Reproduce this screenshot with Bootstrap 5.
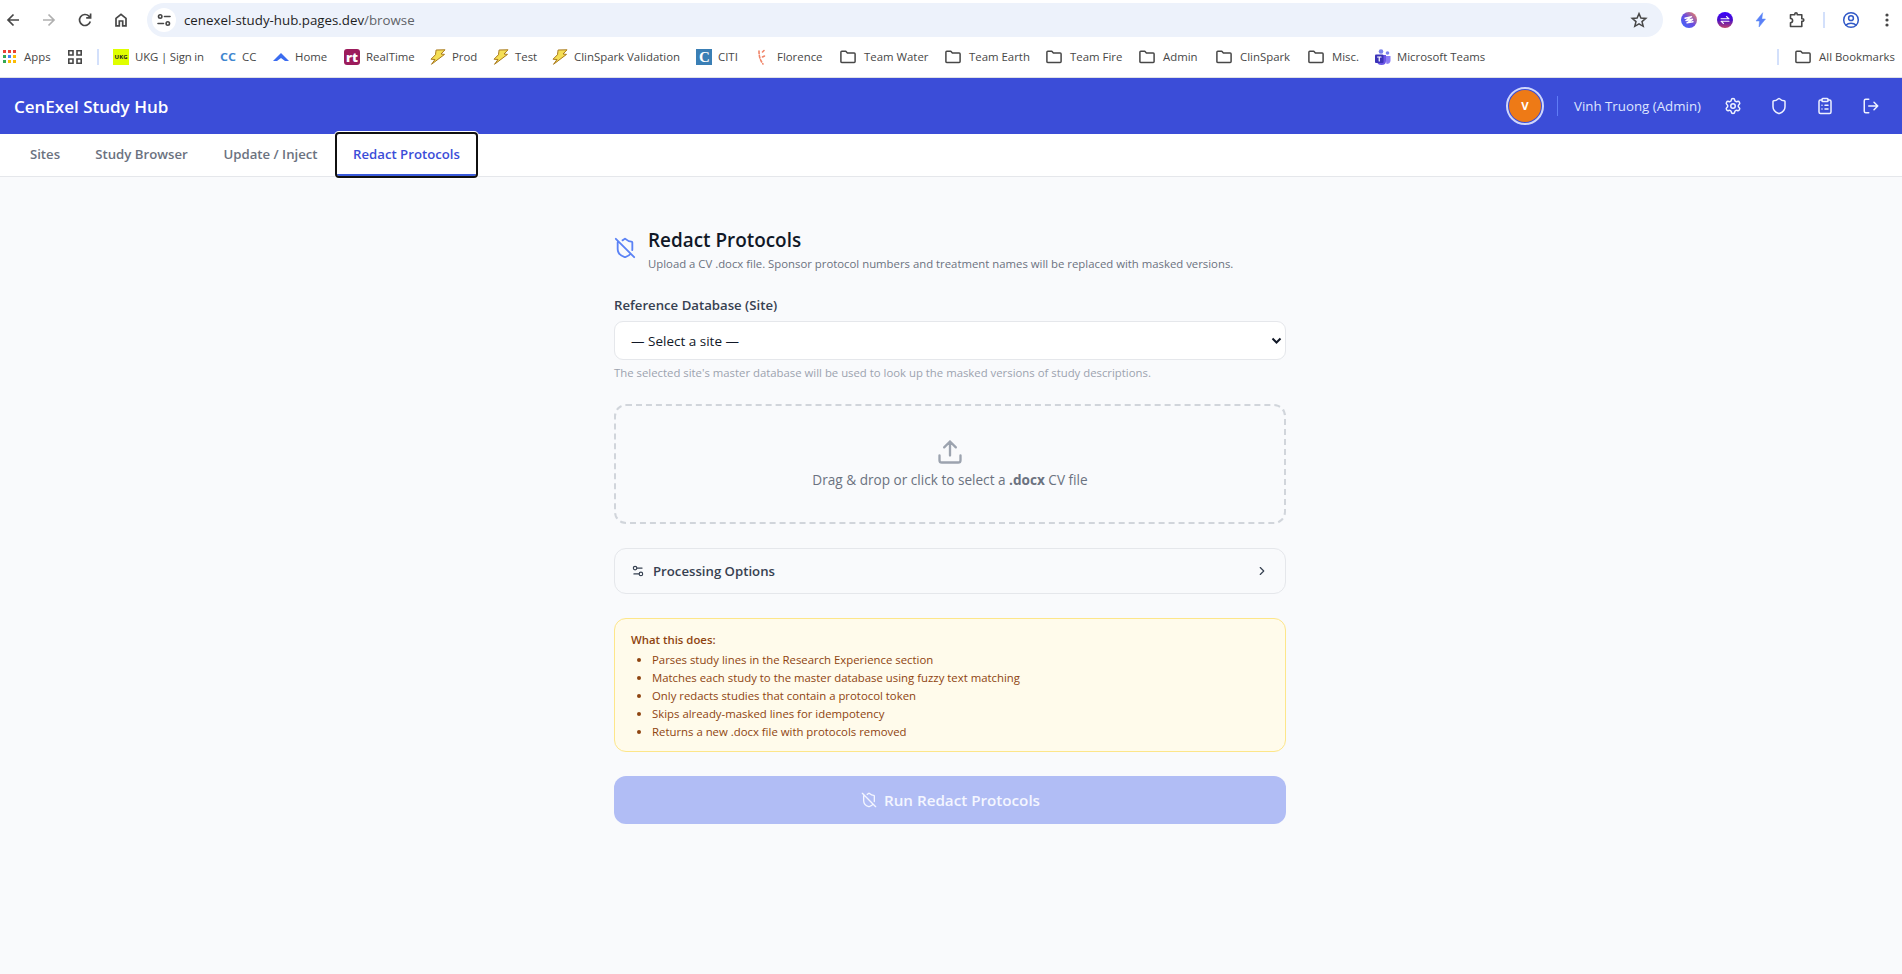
<!DOCTYPE html>
<html lang="en">
<head>
<meta charset="utf-8">
<title>CenExel Study Hub</title>
<link href="https://cdn.jsdelivr.net/npm/bootstrap@5.3.0/dist/css/bootstrap.min.css" rel="stylesheet">
<style>
html,body{height:974px;overflow:hidden}
body{background:#f9fafc;font-family:"Open Sans","Noto Sans",sans-serif;font-size:13.2px;line-height:20px;color:#111827}
svg{display:block;flex:none;fill:none;stroke:currentColor;stroke-width:2;stroke-linecap:round;stroke-linejoin:round}
.toolbar{height:37px;padding-top:3px;color:#474747}
.tool-nav{width:147px;padding-left:4px}
.tool-nav svg{margin-right:18px;stroke-width:1.7;stroke-linecap:butt;stroke-linejoin:miter}
.tool-nav .inactive{color:#b0b0b0}
.omnibox{width:1516px;height:34px;border-radius:17px;background:#edf2fb;padding:0 15px 0 5px}
.site-info{width:24px;height:24px;background:#fff}
.url{font-size:13.3px;color:#1f1f1f;margin-left:8px}
.url span{color:#5f6368}
.bookmarks{height:41px;border-bottom:1px solid #dfe1e5;font-size:11.4px;color:#474747;padding:0 7px 0 3px}
.bm{display:flex;align-items:center;white-space:nowrap;flex:none}
.bm svg{margin-right:6px}
.bm.folder svg{margin-right:8px}
.vline{width:2px;height:16px;background:#d3e0fb;flex:none}
.topbar{height:56px;background:#3b4dd8;padding:0 22px 0 14px;color:#dfe5ff}
.brand-name{font-size:17px;font-weight:600;color:#fff;padding-top:1px}
.avatar{width:38px;height:38px;border:2px solid #cfd6fb;padding:1px}
.avatar div{background:#ee7a16;color:#fff;font-size:11.4px;font-weight:700}
.user-sep{width:1px;height:20px;background:#5f7cf7;margin:0 16px 0 13px}
.user-name{width:150px;white-space:nowrap;font-size:13.3px}
.tabs{height:43px;background:#fff;border-bottom:1px solid #e5e7eb;padding-left:12px}
.tab{height:42px;font-weight:600;color:#6b7280;text-align:center;line-height:41px;flex:none;white-space:nowrap}
.tab.current{margin-left:1px;color:#3b4dd8;border-bottom:2px solid #3b5bdb;outline:2px solid #101010;border-radius:2px;box-shadow:0 0 0 3px #fff;position:relative;background:#fff}
.column{width:672px;margin:0 auto 0 614px;padding-top:49px}
.page-title{font-size:18.900px;font-weight:600;line-height:28px}
.hint{font-size:11.350px;line-height:16px;white-space:nowrap}
.site-select{height:39px;border:1px solid #e5e7eb;border-radius:9px;background:#fff;padding:0 3px 0 16px;font-size:13.500px}
.dropzone{height:120px;border:2px dashed #d1d5db;border-radius:12px;color:#6b7280;margin-top:23px;font-size:13.600px}
.options{height:46px;border:1px solid #e5e7eb;border-radius:12px;padding:0 16px;margin-top:24px;color:#374151;font-weight:600}
.notes{height:134px;border:1px solid #fde68a;border-radius:12px;background:#fffbeb;color:#8e4410;font-size:11.360px;line-height:18px;padding:12px 16px;margin-top:24px}
.notes ul{padding-left:21px;margin:2px 0 0}
.run{height:48px;border-radius:12px;background:#b1bdf5;color:#f4f6ff;font-size:15.200px;font-weight:600;margin-top:24px;padding-left:1px}
</style>
</head>
<body>
<svg width="0" height="0" class="position-absolute"><defs>
<symbol id="folder" viewBox="0 0 16 16"><path d="M.9 3.200q0-.9.9-.9h4l1.600 1.800h6.800q.9 0 .9.9v7.600q0 .9-.9.9H1.800q-.9 0-.9-.9z" stroke-width="1.500"/></symbol>
<symbol id="bolt" viewBox="0 0 16 16"><path d="M6.500 1 15 .8 11 5l3.500.4L1.500 15.300 5 10.500l-4-.3L5.200 6z" fill="#f5df55" stroke="#a8791c" stroke-width="1"/></symbol>
<symbol id="shield-off" viewBox="0 0 24 24"><path d="m2 2 20 20M5 5a1 1 0 0 0-1 1v7c0 5 3.500 7.500 7.670 8.940a1 1 0 0 0 .67.010c2.350-.82 4.480-1.970 5.900-3.710M9.309 3.652A12.252 12.252 0 0 0 11.240 2.280a1.170 1.170 0 0 1 1.520 0C14.510 3.810 17 5 19 5a1 1 0 0 1 1 1v7a9.784 9.784 0 0 1-.08 1.264"/></symbol>
<symbol id="sliders" viewBox="0 0 24 24"><path d="M14 17H5M19 7h-9"/><circle cx="17" cy="17" r="3"/><circle cx="7" cy="7" r="3"/></symbol>
<linearGradient id="g1" x1="1" y1="0" x2="0" y2="1"><stop stop-color="#ff8a50"/><stop offset=".5" stop-color="#6a4be0"/><stop offset="1" stop-color="#3b6cff"/></linearGradient>
<linearGradient id="g2" x1="0" y1="0" x2="0" y2="1"><stop stop-color="#3a00ff"/><stop offset=".5" stop-color="#4a10c8"/><stop offset="1" stop-color="#c0446c"/></linearGradient>
</defs></svg>

<div class="bg-white">
<div class="toolbar d-flex align-items-center">
  <div class="tool-nav d-flex align-items-center">
    <svg width="18" height="18" viewBox="0 0 18 18"><path d="M15 9H4.500M9.500 3.500 4 9l5.500 5.500"/></svg>
    <svg class="inactive" width="18" height="18" viewBox="0 0 18 18"><path d="M3 9h10.500M8.500 3.500 14 9l-5.500 5.500"/></svg>
    <svg width="18" height="18" viewBox="0 0 18 18"><path d="M14.300 10.500A5.500 5.500 0 1 1 13 5.200l1.500 1.500M14.600 2.500v4.400h-4.400"/></svg>
    <svg width="18" height="18" viewBox="0 0 18 18"><path d="M4 14.800V7.300L9 3.400l5 3.900v7.500h-3.300v-4.800H7.300v4.800z"/></svg>
  </div>
  <div class="omnibox d-flex align-items-center">
    <div class="site-info rounded-circle d-flex align-items-center justify-content-center"><svg width="14" height="14" viewBox="0 0 14 14"><g stroke-width="1.600"><circle cx="3.200" cy="3.500" r="1.700"/><path d="M7.500 3.500H13M1 10.500h5.500"/><circle cx="10.800" cy="10.500" r="1.700"/></g></svg></div>
    <div class="url">cenexel-study-hub.pages.dev<span>/browse</span></div>
    <svg class="ms-auto" width="18" height="18" viewBox="0 0 18 18"><path d="m9 2.600 1.900 4.400 4.900.4-3.800 3.200 1.200 4.700L9 12.800l-4.200 2.500L6 10.600 2.200 7.400l4.900-.4z" stroke-width="1.500" stroke-linejoin="miter"/></svg>
  </div>
  <svg style="margin-left:18px" width="16" height="16" viewBox="0 0 16 16"><circle cx="8" cy="8" r="8" fill="url(#g1)" stroke="none"/><path d="m4 6.200 6.500-1.500L5 8.600l6.500-1.300-5.500 3.600 6-1.200" stroke="#fff" stroke-width="1.400"/></svg>
  <svg style="margin-left:20px" width="16" height="16" viewBox="0 0 16 16"><circle cx="8" cy="8" r="8" fill="url(#g2)" stroke="none"/><path d="M4 6.800h8L9.500 4.500M12 9.200H4l2.500 2.300" stroke="#fff" stroke-width="1.100"/></svg>
  <svg style="margin-left:21px" width="14" height="16" viewBox="0 0 14 16"><path d="M8.500 1 2 9h3.500L5 15l6.500-8H8z" fill="#5b7ff7" stroke="#5b8cf7" stroke-width=".5"/></svg>
  <svg style="margin-left:20px" width="18" height="18" viewBox="0 0 18 18"><path d="M2.500 3.800h4.300V3a1 1 0 0 1 2.400 0v.8h4.600v4h.8a1 1 0 0 1 0 2.400h-.8v5.300H2.500v-3.800a2.100 2.100 0 0 0 0-4.200z" stroke-width="1.600"/></svg>
  <div class="vline" style="margin-left:17px"></div>
  <svg style="margin-left:17px;color:#3159c7" width="18" height="18" viewBox="0 0 18 18"><g stroke-width="1.500"><circle cx="9" cy="9" r="7.300"/><circle cx="9" cy="7.200" r="2.400"/><path d="M4 14c2.500-2.500 7.500-2.500 10 0"/></g></svg>
  <svg style="margin-left:18px" width="18" height="18" viewBox="0 0 18 18"><g fill="#474747" stroke="none"><circle cx="9" cy="4" r="1.600"/><circle cx="9" cy="9" r="1.600"/><circle cx="9" cy="14" r="1.600"/></g></svg>
</div>
<div class="bookmarks d-flex align-items-center">
  <div class="bm" style="width:65px"><svg width="14" height="14" viewBox="0 0 14 14" style="margin-right:7px"><g stroke="none"><path fill="#ea4335" d="M0 0h3v3H0zM5 0h3v3H5zM10 0h3v3h-3z"/><path fill="#34a853" d="M0 5h3v3H0zM0 10h3v3H0z"/><path fill="#4285f4" d="M5 5h3v3H5z"/><path fill="#fbbc04" d="M10 5h3v3h-3zM5 10h3v3H5zM10 10h3v3h-3z"/></g></svg>Apps</div>
  <div class="bm" style="width:29px"><svg width="14" height="14" viewBox="0 0 14 14"><path d="M.8 .8h4.200v4.200H.8zM9 .8h4.200v4.200H9zM.8 9h4.200v4.200H.8zM9 9h4.200v4.200H9z" stroke-width="1.600" stroke-linejoin="miter"/></svg></div>
  <div class="vline" style="margin-right:14px"></div>
  <div class="bm" style="width:107px;letter-spacing:-.15px"><svg width="16" height="16" viewBox="0 0 16 16"><path d="M0 0h16v16H0z" fill="#dfff00" stroke="none"/><text x="1.500" y="10.300" font-size="6" font-weight="700" fill="#222" stroke="none" textLength="13">UKG</text></svg>UKG | Sign in</div>
  <div class="bm" style="width:53px"><svg width="16" height="16" viewBox="0 0 16 16"><text x="0" y="12" font-size="11" font-weight="700" fill="#3f86cf" stroke="none" textLength="16" lengthAdjust="spacingAndGlyphs">CC</text></svg>CC</div>
  <div class="bm" style="width:71px"><svg width="16" height="16" viewBox="0 0 16 16"><path d="M0 12 8 4l8 8h-4L8 9l-4 3z" fill="#3b6cf0" stroke="none"/></svg>Home</div>
  <div class="bm" style="width:86px"><svg width="16" height="16" viewBox="0 0 16 16"><rect width="16" height="16" rx="3" fill="#9c1c5c" stroke="none"/><text x="2" y="13" font-size="13" font-weight="800" fill="#fff" stroke="none" textLength="12" lengthAdjust="spacingAndGlyphs">rt</text></svg>RealTime</div>
  <div class="bm" style="width:63px"><svg width="16" height="16"><use href="#bolt"/></svg>Prod</div>
  <div class="bm" style="width:59px"><svg width="16" height="16"><use href="#bolt"/></svg>Test</div>
  <div class="bm" style="width:144px"><svg width="16" height="16"><use href="#bolt"/></svg>ClinSpark Validation</div>
  <div class="bm" style="width:59px"><svg width="16" height="16" viewBox="0 0 16 16"><path d="M0 0h16v16H0z" fill="#3a7fb5" stroke="none"/><text x="3" y="13" font-family="Liberation Serif" font-size="15" font-weight="700" fill="#fff" stroke="none">C</text></svg>CITI</div>
  <div class="bm" style="width:85px"><svg width="16" height="16" viewBox="0 0 16 16"><path d="M4 2c0 5 1 9 4 13M9 1.500 7.500 3M9.500 7 7.500 8" stroke="#f08468" stroke-width="1.600" stroke-dasharray="2.500 2"/></svg>Florence</div>
  <div class="bm folder" style="width:105px"><svg width="16" height="16"><use href="#folder"/></svg>Team Water</div>
  <div class="bm folder" style="width:101px"><svg width="16" height="16"><use href="#folder"/></svg>Team Earth</div>
  <div class="bm folder" style="width:93px"><svg width="16" height="16"><use href="#folder"/></svg>Team Fire</div>
  <div class="bm folder" style="width:77px"><svg width="16" height="16"><use href="#folder"/></svg>Admin</div>
  <div class="bm folder" style="width:92px"><svg width="16" height="16"><use href="#folder"/></svg>ClinSpark</div>
  <div class="bm folder" style="width:67px"><svg width="16" height="16"><use href="#folder"/></svg>Misc.</div>
  <div class="bm"><svg width="16" height="16" viewBox="0 0 16 16"><g stroke="none"><circle cx="6" cy="2.500" r="2.300" fill="#7b83eb"/><circle cx="12.500" cy="4" r="1.800" fill="#7b83eb"/><path d="M10 7h5.500v5q-.5 3-4 3z" fill="#8b7cf5"/><path d="M2 6h9v6q0 4-4.500 4T2 12z" fill="#6a55e6"/><rect y="5.500" width="8.500" height="8.500" rx="1" fill="#3a32b8"/></g><path d="M2.500 8h3.500M4.250 8v4" stroke="#fff" stroke-width="1.200"/></svg>Microsoft Teams</div>
  <div class="vline ms-auto" style="margin-right:16px"></div>
  <div class="bm folder"><svg width="16" height="16"><use href="#folder"/></svg>All Bookmarks</div>
</div>
</div>

<header class="topbar d-flex align-items-center">
  <div class="brand-name">CenExel Study Hub</div>
  <div class="avatar rounded-circle ms-auto"><div class="w-100 h-100 rounded-circle d-flex align-items-center justify-content-center">V</div></div>
  <div class="user-sep"></div>
  <div class="user-name">Vinh Truong (Admin)</div>
  <div class="d-flex" style="gap:28px;color:#eef1ff">
    <svg width="18" height="18" viewBox="0 0 24 24"><path d="M9.671 4.136a2.340 2.340 0 0 1 4.659 0 2.340 2.340 0 0 0 3.319 1.915 2.340 2.340 0 0 1 2.330 4.033 2.340 2.340 0 0 0 0 3.831 2.340 2.340 0 0 1-2.330 4.033 2.340 2.340 0 0 0-3.319 1.915 2.340 2.340 0 0 1-4.659 0 2.340 2.340 0 0 0-3.320-1.915 2.340 2.340 0 0 1-2.330-4.033 2.340 2.340 0 0 0 0-3.831A2.340 2.340 0 0 1 6.350 6.051a2.340 2.340 0 0 0 3.319-1.915"/><circle cx="12" cy="12" r="3"/></svg>
    <svg width="18" height="18" viewBox="0 0 24 24"><path d="M20 13c0 5-3.500 7.500-7.660 8.950a1 1 0 0 1-.67-.01C7.500 20.500 4 18 4 13V6a1 1 0 0 1 1-1c2 0 4.500-1.200 6.240-2.720a1.170 1.170 0 0 1 1.520 0C14.510 3.810 17 5 19 5a1 1 0 0 1 1 1z"/></svg>
    <svg width="18" height="18" viewBox="0 0 24 24"><rect x="8" y="2" width="8" height="4" rx="1"/><path d="M16 4h2a2 2 0 0 1 2 2v14a2 2 0 0 1-2 2H6a2 2 0 0 1-2-2V6a2 2 0 0 1 2-2h2M12 11h4M12 16h4M8 11h.01M8 16h.01"/></svg>
    <svg width="18" height="18" viewBox="0 0 24 24"><path d="M9 21H5a2 2 0 0 1-2-2V5a2 2 0 0 1 2-2h4M16 17l5-5-5-5M21 12H9"/></svg>
  </div>
</header>
<nav class="tabs d-flex">
  <div class="tab" style="width:66px">Sites</div>
  <div class="tab" style="width:127px">Study Browser</div>
  <div class="tab" style="width:131px">Update / Inject</div>
  <div class="tab current" style="width:139px">Redact Protocols</div>
</nav>

<main class="column">
  <div class="d-flex align-items-start">
    <svg width="22" height="22" style="color:#5b82f5;margin:11px 12px 0 0"><use href="#shield-off"/></svg>
    <div><div class="page-title">Redact Protocols</div><div class="hint" style="color:#6b7280;margin-top:2px">Upload a CV .docx file. Sponsor protocol numbers and treatment names will be replaced with masked versions.</div></div>
  </div>
  <div class="fw-semibold" style="color:#374151;margin-top:23px">Reference Database (Site)</div>
  <div class="site-select d-flex align-items-center justify-content-between" style="margin-top:6px"><span>— Select a site —</span><svg width="11" height="8" viewBox="0 0 11 8"><path d="m1.500 1.500 4 4 4-4" stroke-linecap="butt" stroke-linejoin="miter"/></svg></div>
  <div class="hint" style="color:#9ca3af;margin-top:5px">The selected site's master database will be used to look up the masked versions of study descriptions.</div>
  <div class="dropzone d-flex flex-column align-items-center">
    <svg width="28" height="28" viewBox="0 0 24 24" style="color:#9ca3af;margin-top:32px"><path d="M12 3v12M17 8l-5-5-5 5M21 15v4a2 2 0 0 1-2 2H5a2 2 0 0 1-2-2v-4"/></svg>
    <div style="margin-top:4px">Drag &amp; drop or click to select a <b>.docx</b> CV file</div>
  </div>
  <div class="options d-flex align-items-center"><svg width="14" height="14" style="margin-right:8px"><use href="#sliders"/></svg><span>Processing Options</span><svg class="ms-auto" width="14" height="14" viewBox="0 0 24 24"><path d="m9 18 6-6-6-6"/></svg></div>
  <div class="notes"><div class="fw-semibold">What this does:</div>
    <ul><li>Parses study lines in the Research Experience section</li><li>Matches each study to the master database using fuzzy text matching</li><li>Only redacts studies that contain a protocol token</li><li>Skips already-masked lines for idempotency</li><li>Returns a new .docx file with protocols removed</li></ul></div>
  <div class="run d-flex align-items-center justify-content-center"><svg width="16" height="16" style="margin-right:7px"><use href="#shield-off"/></svg>Run Redact Protocols</div>
</main>
<script src="https://cdn.jsdelivr.net/npm/bootstrap@5.3.0/dist/js/bootstrap.bundle.min.js"></script>
</body>
</html>
